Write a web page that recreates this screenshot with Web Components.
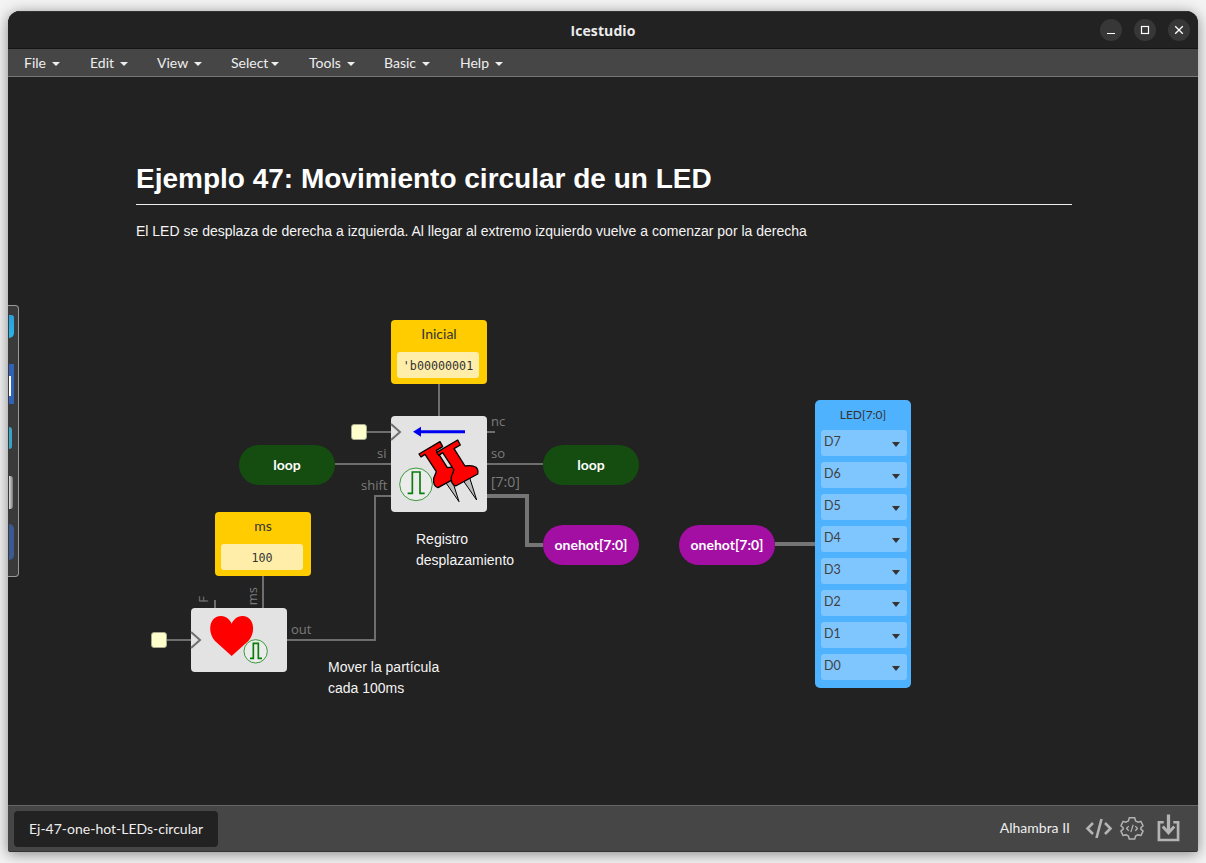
<!DOCTYPE html>
<html lang="en"><head><meta charset="utf-8"><title>Icestudio</title>
<style>
html,body{margin:0;height:100%;background:#f3f3f3;overflow:hidden}
body{padding:11px 8px 11px 8px;box-sizing:border-box;font-family:"Lato","Liberation Sans",sans-serif}
</style></head><body>
<app-window>
  <title-bar slot="title">Icestudio</title-bar>
  <menu-bar slot="menu">
    <menu-item w="67" pad="16">File</menu-item>
    <menu-item w="67" pad="15">Edit</menu-item>
    <menu-item w="74" pad="15">View</menu-item>
    <menu-item w="78" pad="15" tight>Select</menu-item>
    <menu-item w="75" pad="15">Tools</menu-item>
    <menu-item w="75" pad="15">Basic</menu-item>
    <menu-item w="70" pad="16">Help</menu-item>
  </menu-bar>
  <design-canvas slot="canvas">
    <doc-heading slot="doc" title="Ejemplo 47: Movimiento circular de un LED">El LED se desplaza de derecha a izquierda. Al llegar al extremo izquierdo vuelve a comenzar por la derecha</doc-heading>
    <wire-layer></wire-layer>
    <port-label x="491" y="414">nc</port-label>
    <port-label x="377" y="446">si</port-label>
    <port-label x="491" y="446">so</port-label>
    <port-label x="361" y="478">shift</port-label>
    <port-label x="491" y="474" big>[7:0]</port-label>
    <port-label x="291" y="622">out</port-label>
    <port-label x="208" y="596" rot>F</port-label>
    <port-label x="257" y="587" rot>ms</port-label>
    <const-block x="391" y="320" label="Inicial" value="'b00000001"></const-block>
    <const-block x="215" y="512" label="ms" value="100"></const-block>
    <clock-dot x="351" y="424"></clock-dot>
    <clock-dot x="151" y="632"></clock-dot>
    <io-pill x="239" y="445" color="#144d0f">loop</io-pill>
    <io-pill x="543" y="445" color="#144d0f">loop</io-pill>
    <io-pill x="543" y="525" color="#a30ea3">onehot[7:0]</io-pill>
    <io-pill x="679" y="525" color="#a30ea3">onehot[7:0]</io-pill>
    <shift-block x="391" y="416"></shift-block>
    <heart-block x="191" y="608"></heart-block>
    <led-block x="815" y="400" label="LED[7:0]"></led-block>
    <note-text x="416" y="529">Registro<br>desplazamiento</note-text>
    <note-text x="328" y="657">Mover la partícula<br>cada 100ms</note-text>
  </design-canvas>
  <status-bar slot="status" file="Ej-47-one-hot-LEDs-circular" board="Alhambra II"></status-bar>
  <dock-peek slot="overlay"></dock-peek>
</app-window>
<script>
function def(name,css,html,init){
  customElements.define(name,class extends HTMLElement{
    constructor(){super();const s=this.attachShadow({mode:'open'});
      s.innerHTML='<style>'+css+'</style>'+(typeof html==='function'?'':html);}
    connectedCallback(){
      if(typeof html==='function'){const st=this.shadowRoot.querySelector('style').outerHTML;this.shadowRoot.innerHTML=st+html(this);}
      const x=this.getAttribute('x'),y=this.getAttribute('y');
      if(x!==null){this.style.left=x+'px';this.style.top=y+'px';}
      if(init)init(this);
    }
  });
}
const PULSE=(d,w)=>`<path d="${d}" fill="none" stroke="#0a7d0a" stroke-width="${w}"/>`;

def('app-window',`
:host{display:block;position:relative;height:841px;box-shadow:0 2px 14px rgba(0,0,0,.45);border-radius:12px 12px 3px 3px;background:#222}
.w{display:flex;flex-direction:column;height:100%;border-radius:12px 12px 3px 3px;overflow:hidden}
.c{flex:1;display:flex;min-height:0}
::slotted([slot=canvas]){flex:1}
`,`<div class="w"><slot name="title"></slot><slot name="menu"></slot><div class="c"><slot name="canvas"></slot></div><slot name="status"></slot></div><slot name="overlay"></slot>`);

def('title-bar',`
:host{display:flex;align-items:center;justify-content:center;height:38px;flex:none;position:relative;background:#222;box-sizing:border-box;border-top:1px solid #333;border-bottom:1px solid #151515;color:#ececec;font:700 14px "Open Sans","Noto Sans",sans-serif;letter-spacing:.1px}
.b{position:absolute;right:8px;top:7px;display:flex;gap:12px}
.b i{display:flex;align-items:center;justify-content:center;width:22px;height:22px;border-radius:50%;background:#373737}
svg{display:block}
`,`<slot></slot><div class="b">
<i><svg width="10" height="10" viewBox="0 0 10 10"><path d="M1 8.5h8" stroke="#fff" stroke-width="1"/></svg></i>
<i><svg width="10" height="10" viewBox="0 0 10 10"><rect x="1.5" y="1.5" width="7" height="7" fill="none" stroke="#fff" stroke-width="1.2"/></svg></i>
<i><svg width="10" height="10" viewBox="0 0 10 10"><path d="M1.2 1.2l7.6 7.6M8.8 1.2l-7.6 7.6" stroke="#fff" stroke-width="1.3"/></svg></i></div>`);

def('menu-bar',`
:host{display:flex;height:27px;flex:none;box-sizing:content-box;background:#464646;border-bottom:1px solid #777;color:#eee}
`,`<slot></slot>`);

def('menu-item',`
:host{display:flex;align-items:center;font:14px Lato,"Liberation Sans",sans-serif;color:#eee;white-space:nowrap;box-sizing:border-box}
i{display:inline-block;width:0;height:0;border:4px solid transparent;border-top-color:#eee;border-bottom:0;margin-left:var(--g,6px);margin-top:2px}
`,t=>`<slot></slot><i></i>`,t=>{t.style.width=t.getAttribute('w')+'px';t.style.paddingLeft=t.getAttribute('pad')+'px';if(t.hasAttribute('tight'))t.style.setProperty('--g','2.5px');});

def('design-canvas',`
:host{display:block;position:relative;background:#222;overflow:hidden}
.o{position:absolute;left:-8px;top:-77px;width:1206px;height:863px}
`,`<slot name="doc"></slot><div class="o"><slot></slot></div>`);

def('doc-heading',`
:host{display:block;margin:86px 126px 0 128px;color:#fff;font-family:"Liberation Sans",Arial,sans-serif}
h1{margin:0;font:700 28px/32px "Liberation Sans",Arial,sans-serif;padding-bottom:9px;border-bottom:1px solid #eee}
p{margin:16px 0 0;font:14px/20px "Liberation Sans",Arial,sans-serif;color:#f4f4f4}
`,t=>`<h1>${t.getAttribute('title')}</h1><p><slot></slot></p>`);

def('wire-layer',`
:host{position:absolute;left:0;top:0;display:block}
svg{display:block}
path{fill:none;stroke:#6e6e6e;stroke-width:2}
.t{stroke:#757575;stroke-width:4}
`,`<svg width="1206" height="863">
<path d="M439 384V416"/><path d="M367 432H391"/><path d="M487 432H495"/><path d="M335 464H391"/><path d="M487 464H543"/>
<path d="M391 496H375V640H287"/><path class="t" d="M487 496H527V545H543"/><path class="t" d="M775 544H815"/>
<path d="M263 576V608"/><path d="M215 600V608"/><path d="M167 640H191"/>
</svg>`);

def('port-label',`
:host{position:absolute;display:block;font:13px/15px "Open Sans","Noto Sans",sans-serif;color:#7c7c7c;white-space:nowrap}
:host([big]){font-size:14px;line-height:16px}
:host([rot]){transform-origin:0 0;transform:rotate(-90deg) translate(-100%,-12px);}
`,`<slot></slot>`);

def('const-block',`
:host{position:absolute;display:flex;flex-direction:column;align-items:center;box-sizing:border-box;width:96px;height:64px;background:#fc0;border-radius:4px;padding:6px 8px 6px 6px;color:#333;font:14px/16px Lato,"Liberation Sans",sans-serif}
.l{height:26px;display:flex;align-items:flex-start;margin-left:2px}
.v{width:82px;height:26px;background:#fea;border-radius:3px;font:11.7px/29px "DejaVu Sans Mono","Liberation Mono",monospace;color:#333;text-align:center;margin-left:0}
`,t=>`<div class="l">${t.getAttribute('label')}</div><div class="v">${t.getAttribute('value')}</div>`);

def('clock-dot',`
:host{position:absolute;display:block;box-sizing:border-box;width:16px;height:16px;background:#ffc;border:1px solid #a8a890;border-radius:3px}
`,``);

def('io-pill',`
:host{position:absolute;display:flex;align-items:center;justify-content:center;box-sizing:border-box;padding-bottom:1px;width:96px;height:40px;border-radius:20px;color:#fff;font:700 14px Lato,"Liberation Sans",sans-serif;white-space:nowrap}
`,`<slot></slot>`,t=>{t.style.background=t.getAttribute('color')});

def('shift-block',`
:host{position:absolute;display:block;width:96px;height:96px;background:#e3e3e3;border-radius:4px}
svg{position:absolute;left:0;top:0;overflow:visible}
`,`<svg width="96" height="96" viewBox="18 18 288 288">
<path d="M18 42L45 66L18 90" fill="none" stroke="#6e6e6e" stroke-width="6"/>
<path d="M240 61H108V50L84 65L108 80V70H240Z" fill="#0000f0"/>
<g transform="translate(-53 5)"><path d="M232 208L275 270L253 200Z" fill="#bbb" stroke="#000" stroke-width="3"/><path d="M155 127L218 90L226 105L207 116L240 168Q262 164 273 172Q281 180 278 192L212 228Q196 222 199 200L207 180L173 128L161 136Z" fill="#f00" stroke="#000" stroke-width="4" stroke-linejoin="round"/></g>
<g><path d="M232 208L275 270L253 200Z" fill="#bbb" stroke="#000" stroke-width="3"/><path d="M155 127L218 90L226 105L207 116L240 168Q262 164 273 172Q281 180 278 192L212 228Q196 222 199 200L207 180L173 128L161 136Z" fill="#f00" stroke="#000" stroke-width="4" stroke-linejoin="round"/></g>
<circle cx="93" cy="223" r="49" fill="#ececec" stroke="#3a9a3a" stroke-width="3"/>
${PULSE('M68 250H82V186H105V250H119',5)}
</svg>`);

def('heart-block',`
:host{position:absolute;display:block;width:96px;height:64px;background:#e3e3e3;border-radius:4px}
svg{position:absolute;left:0;top:0;overflow:visible}
`,`<svg width="96" height="64" viewBox="18 54 288 192">
<path d="M18 126L45 150L18 174" fill="none" stroke="#6e6e6e" stroke-width="6"/>
<path d="M140 198L90 153C66 128 72 78 108 78C125 78 135 90 140 101C145 90 155 78 172 78C208 78 214 128 190 153Z" fill="#f00"/>
<circle cx="212" cy="184" r="35" fill="#ececec" stroke="#3a9a3a" stroke-width="3"/>
${PULSE('M195 205H205V160H220V205H231',5)}
</svg>`);

def('led-block',`
:host{position:absolute;display:flex;flex-direction:column;box-sizing:border-box;width:96px;height:288px;background:#4fb2ff;border-radius:5px;padding:6px 4px 0 6px;color:#333;font:12px/18px Lato,"Liberation Sans",sans-serif}
.l{text-align:center;height:24px;margin-left:-2px;font-size:12px}
.rows{display:flex;flex-direction:column;gap:6px}
.r{display:flex;justify-content:space-between;height:26px;border-radius:3px;background:#7fc6ff;padding:0 7px 0 3px;box-sizing:border-box;line-height:24.5px;font-size:12.5px;color:#3f3f3f}
.r i{width:0;height:0;border:4px solid transparent;border-top:5px solid #333;border-bottom:0;margin-top:12px}
`,t=>`<div class="l">${t.getAttribute('label')}</div><div class="rows">${[7,6,5,4,3,2,1,0].map(n=>`<div class="r"><span>D${n}</span><i></i></div>`).join('')}</div>`);

def('note-text',`
:host{position:absolute;display:block;color:#f4f4f4;font:14px/20.5px "Liberation Sans",Arial,sans-serif;white-space:nowrap}
`,`<slot></slot>`);

def('status-bar',`
:host{display:flex;align-items:center;height:47px;flex:none;box-sizing:border-box;background:#464646;border-top:1px solid #666;border-bottom:1px solid #333;padding:0 18px 0 6px;color:#eee;font:14px Lato,"Liberation Sans",sans-serif}
.f{display:flex;align-items:center;justify-content:center;width:204px;height:36px;box-sizing:border-box;padding-bottom:2px;background:#222;border-radius:4px;white-space:nowrap;margin-top:1px}
.b{margin-left:auto;margin-right:16px;margin-bottom:2px}
svg{display:block}
.i{display:flex;align-items:center;gap:8px;margin-bottom:2px}
`,t=>`<div class="f">${t.getAttribute('file')}</div><div class="b">${t.getAttribute('board')}</div><div class="i">
<svg width="28" height="22" viewBox="0 0 28 22" fill="none" stroke="#b4b4b4" stroke-width="2.6" style="margin-right:-1px;margin-left:-1px"><path d="M8 6L2.5 11.5L8 17M20 6L25.5 11.5L20 17"/><path d="M16.5 2L11.5 21"/></svg>
<svg width="24" height="24" viewBox="0 0 26 26" fill="none" stroke="#b4b4b4" stroke-width="1.6" stroke-linejoin="round"><path d="M10 2L16 2L16.8 5.2L19.5 6.7L22.6 5.8L25 10.6L22.6 12.8V14.2L25 16.4L22.6 21.2L19.5 20.3L16.8 21.8L16 25H10L9.2 21.8L6.5 20.3L3.4 21.2L1 16.4L3.4 14.2V12.8L1 10.6L3.4 5.8L6.5 6.7L9.2 5.2Z"/><path d="M9.5 11L7 13.5L9.5 16M16.5 11L19 13.5L16.5 16M14.3 9.5L11.7 17.5" stroke-width="1.3"/></svg>
<svg width="23" height="30" viewBox="0 0 24 30" fill="none" stroke="#b4b4b4" stroke-width="2.8" style="margin-left:5px"><path d="M7 9H2V27.5H22V9H17"/><path d="M12 1V19" stroke-width="3.4"/><path d="M6 13.5L12 20L18 13.5" stroke-width="3"/></svg></div>`);

def('dock-peek',`
:host{position:absolute;left:0;top:294px;display:flex;flex-direction:column;box-sizing:border-box;width:11px;height:272px;background:#3a3a3a;border:1px solid #999;border-left:0;border-radius:0 4px 4px 0;padding:9px 4px 0 1px}
i{display:block;flex:none}
`,`<i style="height:23px;background:linear-gradient(#2a9fdc,#26b5ec);border-radius:0 3px 6px 0"></i>
<i style="height:40px;margin-top:26px;background:#2f62b8;position:relative"><b style="position:absolute;left:0;top:12px;width:2px;height:20px;background:#fff"></b></i>
<i style="height:22px;width:3px;margin-top:23px;background:#3aa4c8;border-radius:0 3px 3px 0"></i>
<i style="height:33px;width:4px;margin-top:27px;background:linear-gradient(90deg,#ddd,#777);border-radius:0 3px 3px 0"></i>
<i style="height:36px;margin-top:15px;background:#3b5a94;border-radius:0 18px 18px 0"></i>`);
</script>
</body></html>
